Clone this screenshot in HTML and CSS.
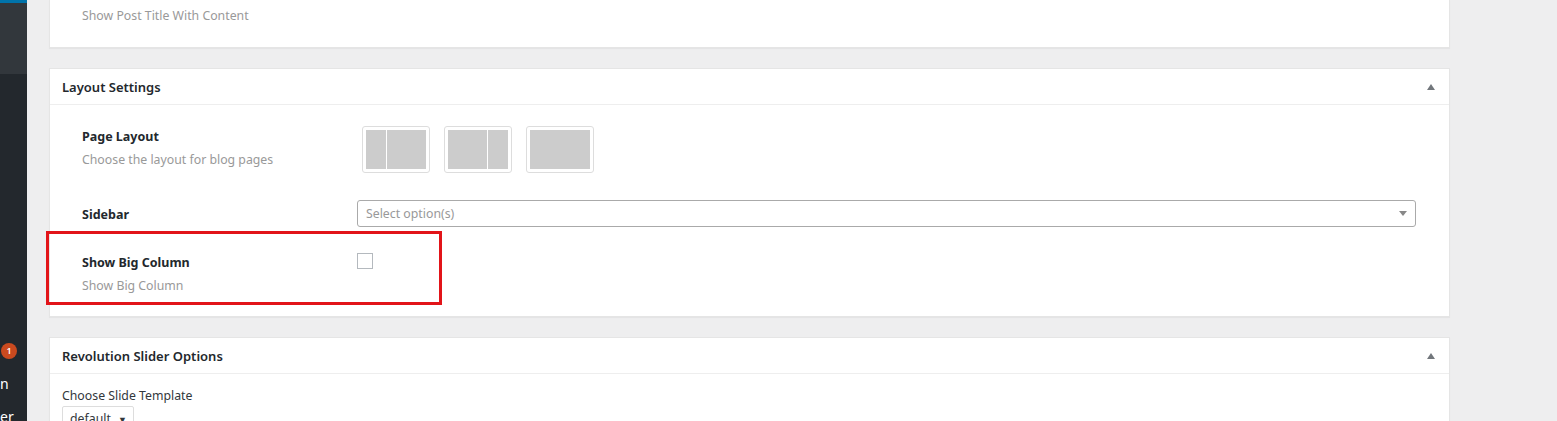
FILE: index.html
```html
<!DOCTYPE html>
<html>
<head>
<meta charset="utf-8">
<link rel="stylesheet" href="styles.css">
</head>
<body>
<div class="page">
  <aside class="adminmenu">
    <div class="menu-top"></div>
    <div class="menu-rest">
      <span class="badge">1</span>
      <span class="menu-text t1">n</span>
      <span class="menu-text t2">er</span>
    </div>
  </aside>
  <main class="content">
    <section class="panel panel-first">
      <div class="row row-tail">
        <div class="desc">Show Post Title With Content</div>
      </div>
    </section>

    <section class="panel">
      <header class="panel-head">
        <h2>Layout Settings</h2>
        <span class="toggle"></span>
      </header>
      <div class="panel-body">
        <div class="row row-layout">
          <div class="label-col">
            <div class="label">Page Layout</div>
            <div class="desc">Choose the layout for blog pages</div>
          </div>
          <div class="field-col layouts">
            <div class="layout-opt">
              <div class="blk narrow"></div><div class="blk wide"></div>
            </div>
            <div class="layout-opt">
              <div class="blk wide"></div><div class="blk narrow"></div>
            </div>
            <div class="layout-opt">
              <div class="blk full"></div>
            </div>
          </div>
        </div>
        <div class="row row-sidebar">
          <div class="label-col">
            <div class="label">Sidebar</div>
          </div>
          <div class="field-col select-col">
            <div class="select">
              <span class="placeholder">Select option(s)</span>
              <span class="caret"></span>
            </div>
          </div>
        </div>
        <div class="row row-check">
          <div class="highlight"></div>
          <div class="label-col">
            <div class="label">Show Big Column</div>
            <div class="desc">Show Big Column</div>
          </div>
          <div class="field-col">
            <span class="checkbox"></span>
          </div>
        </div>
      </div>
    </section>

    <section class="panel">
      <header class="panel-head">
        <h2>Revolution Slider Options</h2>
        <span class="toggle"></span>
      </header>
      <div class="panel-body slider-body">
        <div class="plain-label">Choose Slide Template</div>
        <div class="mini-select">default <span class="mini-caret">▼</span></div>
      </div>
    </section>
  </main>
</div>
</body>
</html>
```
FILE: styles.css
```css
* { box-sizing: border-box; }
html, body { margin: 0; padding: 0; }
body {
  background: #eeeeef;
  font-family: "Noto Sans", "Open Sans", sans-serif;
  font-size: 12px;
  color: #23282d;
  height: 421px;
  overflow: hidden;
}
.page { display: flex; height: 421px; }

.adminmenu {
  width: 27px;
  flex: none;
  background: #23282d;
  display: flex;
  flex-direction: column;
}
.menu-top {
  height: 74px;
  background: #32373c;
  border-top: 3px solid #0073aa;
}
.menu-rest { position: relative; flex: 1; }
.badge {
  position: absolute;
  left: 1px; top: 269px;
  width: 16px; height: 16px;
  border-radius: 50%;
  background: #ca4a1f;
  color: #fff;
  font-size: 9px;
  font-weight: 600;
  line-height: 16px;
  text-align: center;
}
.menu-text {
  position: absolute;
  left: 0;
  color: #fff;
  font-size: 14px;
  line-height: 18px;
}
.t1 { top: 301px; }
.t2 { top: 334px; }

.content {
  margin-left: 22px;
  width: 1401px;
  flex: none;
  display: flex;
  flex-direction: column;
  gap: 20px;
}
.panel {
  background: #fff;
  border: 1px solid #e5e5e5;
  box-shadow: 0 1px 1px rgba(0,0,0,0.04);
}
.panel-first { border-top: none; }
.row-tail { padding: 7px 0 22px 32px; }

.panel-head {
  height: 36px;
  border-bottom: 1px solid #eee;
  display: flex;
  align-items: center;
  justify-content: space-between;
  padding: 0 13px 0 12px;
}
.panel-head h2 {
  margin: 0;
  font-size: 13px;
  font-weight: 600;
  color: #23282d;
  line-height: 18px;
}
.toggle {
  width: 0; height: 0;
  border-left: 4px solid transparent;
  border-right: 4px solid transparent;
  border-bottom: 6px solid #72777c;
  margin-right: 1px;
}

.panel-body { padding: 0 32px 21px 32px; }
.row { display: flex; position: relative; }
.label-col { width: 275px; flex: none; }
.label {
  font-size: 12.5px;
  font-weight: 700;
  color: #23282d;
  line-height: 18px;
}
.desc {
  font-size: 12.3px;
  color: #999;
  line-height: 18px;
  margin-top: 5px;
}
.row-tail .desc { margin-top: 0; }

.row-layout { padding-top: 21px; }
.row-layout .label-col { padding-top: 2px; }
.layouts { display: flex; gap: 14px; padding-left: 5px; }
.layout-opt {
  width: 68px; height: 47px;
  border: 1px solid #ddd;
  border-radius: 3px;
  padding: 3px;
  display: flex;
  gap: 1px;
}
.blk { background: #ccc; height: 100%; }
.narrow { width: 20px; }
.wide { flex: 1; }
.full { flex: 1; }

.row-sidebar { margin-top: 27px; align-items: center; }
.row-sidebar .label-col { padding-top: 2px; }
.select-col { flex: 1; margin-right: 1px; }
.select {
  height: 27px;
  border: 1px solid #aaa;
  border-radius: 3px;
  display: flex;
  align-items: center;
  justify-content: space-between;
  padding: 0 8px 0 8px;
}
.placeholder { color: #999; font-size: 12.3px; }
.caret {
  width: 0; height: 0;
  border-left: 4px solid transparent;
  border-right: 4px solid transparent;
  border-top: 5px solid #888;
}

.row-check { margin-top: 26px; }
.row-check .label-col { padding-top: 1px; }
.row-check .checkbox {
  display: block;
  width: 16px; height: 16px;
  border: 1px solid #b4b9be;
  margin-top: 0;
}
.highlight {
  position: absolute;
  left: -36px; top: -22px;
  width: 396px; height: 74px;
  border: 3px solid #e21419;
}

.slider-body { padding: 13px 12px 0 12px; }
.plain-label {
  font-size: 12.3px;
  color: #32373c;
  line-height: 18px;
}
.mini-select {
  margin-top: 1px;
  width: 72px; height: 28px;
  border: 1px solid #ddd;
  border-radius: 2px;
  padding: 3px 0 0 7px;
  font-size: 12.3px;
  color: #32373c;
}
.mini-caret { font-size: 9px; margin-left: 4px; }
```
